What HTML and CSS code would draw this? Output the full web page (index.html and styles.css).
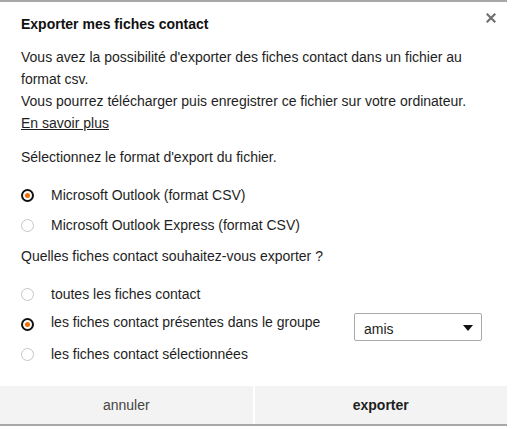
FILE: index.html
```html
<!DOCTYPE html>
<html lang="fr">
<head>
<meta charset="utf-8">
<title>Exporter mes fiches contact</title>
<link rel="stylesheet" href="styles.css">
</head>
<body>
<div class="dialog">
  <div class="body">
    <button class="close" aria-label="Fermer">
      <svg width="10" height="10" viewBox="0 0 10 10"><path d="M1.5 1.5L8.5 8.5M8.5 1.5L1.5 8.5" stroke="#707070" stroke-width="2.2" stroke-linecap="square"/></svg>
    </button>
    <h1 class="title">Exporter mes fiches contact</h1>
    <p class="intro">Vous avez la possibilité d'exporter des fiches contact dans un fichier au format csv.<br>Vous pourrez télécharger puis enregistrer ce fichier sur votre ordinateur.<br><a href="#" class="link">En savoir plus</a></p>
    <p class="label">Sélectionnez le format d'export du fichier.</p>
    <div class="options">
      <div class="row"><span class="radio checked"></span><span>Microsoft Outlook (format CSV)</span></div>
      <div class="row"><span class="radio"></span><span>Microsoft Outlook Express (format CSV)</span></div>
    </div>
    <p class="label q">Quelles fiches contact souhaitez-vous exporter ?</p>
    <div class="options second">
      <div class="row"><span class="radio"></span><span>toutes les fiches contact</span></div>
      <div class="row"><span class="radio checked"></span><span class="grow">les fiches contact présentes dans le groupe</span>
        <div class="select"><span>amis</span><span class="caret"></span></div>
      </div>
      <div class="row"><span class="radio"></span><span>les fiches contact sélectionnées</span></div>
    </div>
  </div>
  <div class="footer">
    <button class="btn">annuler</button>
    <button class="btn primary">exporter</button>
  </div>
</div>
</body>
</html>
```
FILE: styles.css
```css
* { box-sizing: border-box; }
html, body { margin: 0; padding: 0; background: #fff; }
body {
  font-family: "Liberation Sans", Arial, sans-serif;
  font-size: 14px;
  color: #1e1e1e;
}
.dialog {
  width: 507px;
  border-top: 2px solid #a8a8a8;
  border-bottom: 2px solid #a8a8a8;
  background: #fff;
}
.body {
  position: relative;
  padding: 12px 20px 17px 21px;
}
.close {
  position: absolute;
  top: 11px;
  right: 11px;
  border: 0;
  background: none;
  padding: 0;
  width: 10px;
  height: 10px;
  display: flex;
}
.title {
  margin: 0;
  font-size: 14px;
  font-weight: bold;
  line-height: 20px;
  color: #111;
}
.intro {
  margin: 12px 0 0;
  line-height: 22px;
}
.link { color: #1e1e1e; text-decoration: underline; }
.label {
  margin: 12px 0 0;
  line-height: 22px;
}
.q { margin-top: 5px; }
.options { margin-top: 12px; }
.options.second { margin-top: 12px; }
.row {
  display: flex;
  align-items: center;
  height: 30px;
}
.radio {
  width: 13px;
  height: 13px;
  border-radius: 50%;
  border: 1px solid #c6c6c6;
  margin-left: 0;
  margin-right: 17px;
  flex: none;
  display: flex;
  align-items: center;
  justify-content: center;
}
.radio.checked { border: 2px solid #111; }
.radio.checked::after {
  content: "";
  width: 5px;
  height: 5px;
  border-radius: 50%;
  background: #f16e00;
}
.grow { flex: 1; margin-top: -4px; }
.select {
  width: 128px;
  height: 28px;
  border: 1px solid #aaa;
  border-radius: 2px;
  display: flex;
  align-items: center;
  justify-content: space-between;
  padding: 3px 8px 0 9px;
  margin-top: 6px;
  margin-right: 5px;
}
.caret {
  width: 0; height: 0;
  border-left: 5px solid transparent;
  border-right: 5px solid transparent;
  border-top: 6px solid #111;
  margin-top: -2px;
}
.footer {
  display: flex;
  gap: 2px;
  background: #fff;
}
.btn {
  flex: 1;
  height: 38px;
  border: 0;
  background: #f3f3f3;
  font-family: inherit;
  font-size: 14px;
  color: #444;
  padding: 0;
}
.btn.primary { font-weight: bold; color: #1e1e1e; }
```
